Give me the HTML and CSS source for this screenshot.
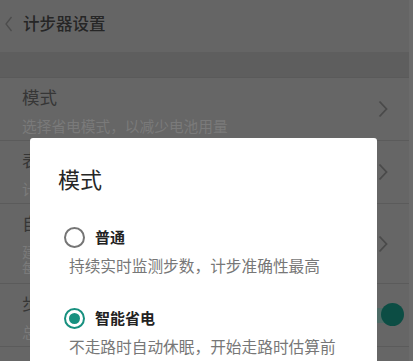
FILE: index.html
```html
<!DOCTYPE html>
<html lang="zh-CN">
<head>
<meta charset="utf-8">
<title>计步器设置</title>
<link rel="stylesheet" href="styles.css">
</head>
<body>
<div class="screen">
  <div class="page">
    <header class="header">
      <svg class="back" width="10" height="16" viewBox="0 0 10 16"><polyline points="7.5,1 2,8 7.5,15" fill="none" stroke="#4c4c4c" stroke-width="1.3"/></svg>
      <span class="header-title">计步器设置</span>
    </header>
    <div class="band"></div>
    <div class="list">
      <div class="row">
        <div class="row-text">
          <div class="row-title">模式</div>
          <div class="row-sub">选择省电模式，以减少电池用量</div>
        </div>
        <svg class="chev" width="10" height="18" viewBox="0 0 10 18"><polyline points="1.5,1.5 8.5,9 1.5,16.5" fill="none" stroke="#4a4a4a" stroke-width="1.8"/></svg>
      </div>
      <div class="row">
        <div class="row-text">
          <div class="row-title">表盘显示</div>
          <div class="row-sub">计步数据显示在表盘上</div>
        </div>
        <svg class="chev" width="10" height="18" viewBox="0 0 10 18"><polyline points="1.5,1.5 8.5,9 1.5,16.5" fill="none" stroke="#4a4a4a" stroke-width="1.8"/></svg>
      </div>
      <div class="row row-tall">
        <div class="row-text">
          <div class="row-title">自动暂停</div>
          <div class="row-sub">建议在长时间静止时开启自动暂停功能</div>
          <div class="row-sub">每天零点自动清零</div>
        </div>
        <svg class="chev" width="10" height="18" viewBox="0 0 10 18"><polyline points="1.5,1.5 8.5,9 1.5,16.5" fill="none" stroke="#4a4a4a" stroke-width="1.8"/></svg>
      </div>
      <div class="row">
        <div class="row-text">
          <div class="row-title">步数提醒</div>
          <div class="row-sub">总步数达到目标时提醒</div>
        </div>
        <div class="toggle"><span class="track"></span><span class="thumb"></span></div>
      </div>
      <div class="row">
        <div class="row-text">
          <div class="row-title">目标步数</div>
        </div>
      </div>
    </div>
  </div>
  <div class="edge"></div>

  <div class="dialog">
    <div class="dialog-title">模式</div>
    <div class="option">
      <div class="opt-line">
        <span class="radio"></span>
        <span class="opt-label">普通</span>
      </div>
      <div class="opt-desc">持续实时监测步数，计步准确性最高</div>
    </div>
    <div class="option option-second">
      <div class="opt-line">
        <span class="radio radio-on"><span class="dot"></span></span>
        <span class="opt-label">智能省电</span>
      </div>
      <div class="opt-desc">不走路时自动休眠，开始走路时估算前<br>几步</div>
    </div>
  </div>
</div>
</body>
</html>
```

FILE: styles.css
```css
html, body {
  margin: 0;
  padding: 0;
}
body {
  width: 413px;
  height: 361px;
  overflow: hidden;
  background: #666666;
  font-family: "Noto Sans CJK SC", "Noto Sans", sans-serif;
}
.screen {
  position: relative;
  width: 413px;
  height: 361px;
  overflow: hidden;
  display: flex;
}
.page {
  flex: 1;
  background: #666666;
}
.edge {
  width: 4px;
  background: #6b6b6b;
}
.header {
  height: 52px;
  display: flex;
  align-items: center;
  padding-left: 4px;
  padding-bottom: 6px;
  box-sizing: border-box;
  background: #656565;
}
.back {
  margin-right: 9px;
  margin-top: 1px;
}
.header-title {
  font-size: 16.5px;
  line-height: 24px;
  color: #262626;
  font-weight: 500;
}
.band {
  height: 25px;
  background: #5e5e5e;
  border-bottom: 1px solid #5a5a5a;
}
.row {
  height: 63px;
  display: flex;
  align-items: center;
  padding: 0 21px 0 22px;
  border-bottom: 1px solid #5b5b5b;
  box-sizing: border-box;
}
.row-tall {
  height: 80px;
}
.row-text {
  flex: 1;
  margin-top: 0;
}
.row-title {
  font-size: 17.5px;
  line-height: 24px;
  color: #363636;
}
.row-sub {
  font-size: 14.7px;
  line-height: 16px;
  margin-top: 9px;
  color: #7a7a7a;
}
.row-sub + .row-sub {
  margin-top: 0;
}
.chev {
  display: block;
}
.toggle {
  position: relative;
  width: 40px;
  height: 24px;
  margin-right: -21px;
}
.track {
  position: absolute;
  left: 2px;
  top: 5px;
  width: 30px;
  height: 15px;
  border-radius: 8px;
  background: #4e6b66;
}
.thumb {
  position: absolute;
  left: 12px;
  top: 0;
  width: 23px;
  height: 23px;
  border-radius: 50%;
  background: #0c4d44;
}
.dialog {
  position: absolute;
  left: 30px;
  top: 138px;
  width: 347px;
  height: 280px;
  background: #ffffff;
  border-radius: 3px;
  box-sizing: border-box;
  padding: 25px 20px 0 28px;
}
.dialog-title {
  font-size: 22px;
  line-height: 30px;
  color: #262626;
}
.option {
  margin-top: 32px;
  padding-left: 6px;
}
.option-second {
  margin-top: 29px;
}
.opt-line {
  display: flex;
  align-items: center;
  height: 24px;
}
.radio {
  width: 21px;
  height: 21px;
  box-sizing: border-box;
  border: 2px solid #757575;
  border-radius: 50%;
  display: flex;
  align-items: center;
  justify-content: center;
  margin-right: 10px;
}
.radio-on {
  border-color: #17907f;
}
.dot {
  width: 11px;
  height: 11px;
  border-radius: 50%;
  background: #17907f;
}
.opt-label {
  font-size: 15px;
  line-height: 24px;
  color: #222222;
  font-weight: 700;
}
.opt-desc {
  margin-top: 5px;
  margin-left: 5px;
  font-size: 15.7px;
  line-height: 23px;
  color: #777777;
}
```
